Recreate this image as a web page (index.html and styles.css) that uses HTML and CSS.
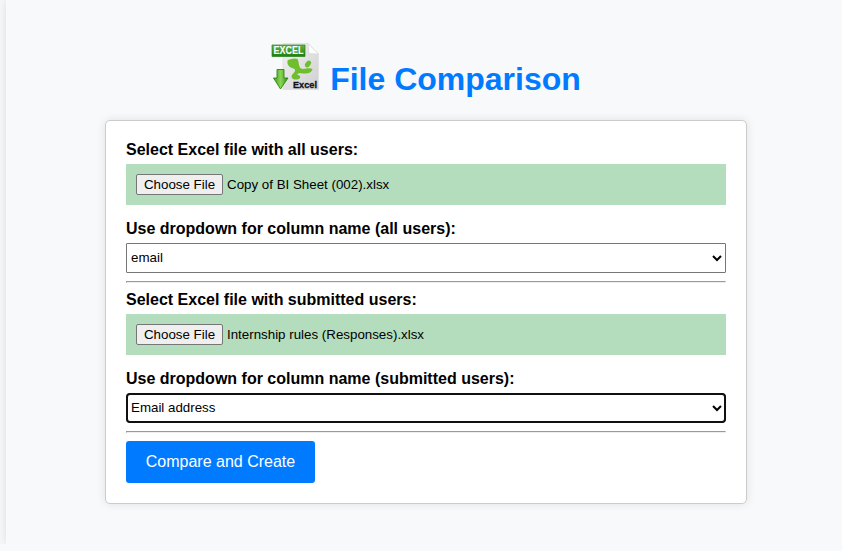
FILE: index.html
```html
<!DOCTYPE html>
<html lang="en">
<head>
<meta charset="utf-8">
<title>File Comparison</title>
<link rel="stylesheet" href="styles.css">
</head>
<body>
<main class="container">
  <header class="heading">
    <svg class="logo" viewBox="0 0 50 50" aria-hidden="true">
      <defs>
        <linearGradient id="paper" x1="0" y1="0" x2="1" y2="1"><stop offset="0" stop-color="#f3f3f4"/><stop offset="1" stop-color="#cfcfd1"/></linearGradient>
        <linearGradient id="banner" x1="0" y1="0" x2="0" y2="1"><stop offset="0" stop-color="#62b843"/><stop offset="1" stop-color="#1f7d12"/></linearGradient>
        <linearGradient id="arrow" x1="0" y1="0" x2="1" y2="0"><stop offset="0" stop-color="#3c9a20"/><stop offset=".5" stop-color="#8bd653"/><stop offset="1" stop-color="#2f8a18"/></linearGradient>
      </defs>
      <path d="M13 2.500h25l10.500 10.500v35.500H13z" fill="url(#paper)" stroke="#dedee0" stroke-width=".7"/>
      <path d="M38 2.500l1 10 9.500.5z" fill="#fff" stroke="#d2d2d4" stroke-width=".6"/>
      <path d="M17.500 19.500C19 18 25 16.500 27.500 18C29 20 28.500 26 31 27.500C34 29 39 26 42.500 28C42 31.500 38 33 33 32.500C30 32 28 32 27 33.500C29 34 31 35 30 37C28 39.500 22 39 21.500 36C21.500 33 24.500 32 25 30C25.500 28 24 27.500 22 27C18.500 26 17 23 17.500 19.500Z" fill="#6fbe2e"/>
      <ellipse cx="38" cy="23" rx="2.500" ry="3.700" transform="rotate(38 38 23)" fill="#6fbe2e"/>
      <path d="M2 4h33v11.500H2z" fill="url(#banner)" stroke="#287f19" stroke-width=".7"/>
      <text class="logo-banner" x="3.500" y="13.300" textLength="30" lengthAdjust="spacingAndGlyphs">EXCEL</text>
      <path d="M7 28.500h7v8.500h4L10.500 48 3.500 37h3.500z" fill="url(#arrow)" stroke="#2d8519" stroke-width=".9" stroke-linejoin="round"/>
      <text class="logo-name" x="23" y="46.500" textLength="24" lengthAdjust="spacingAndGlyphs">Excel</text>
    </svg>
    <h1>File Comparison</h1>
  </header>
  <form class="card">
    <label for="all-file">Select Excel file with all users:</label>
    <div class="file"><button type="button" id="all-file">Choose File</button><span>Copy of BI Sheet (002).xlsx</span></div>
    <label for="all-column">Use dropdown for column name (all users):</label>
    <select id="all-column"><option>email</option></select>
    <hr>
    <label for="submitted-file">Select Excel file with submitted users:</label>
    <div class="file"><button type="button" id="submitted-file">Choose File</button><span>Internship rules (Responses).xlsx</span></div>
    <label for="submitted-column">Use dropdown for column name (submitted users):</label>
    <select id="submitted-column" class="focused"><option>Email address</option></select>
    <hr>
    <button type="button" class="submit">Compare and Create</button>
  </form>
</main>
</body>
</html>
```
FILE: styles.css
```css
* { box-sizing: border-box; }
html { overflow: hidden; }
body {
  margin: 0;
  background: #f8f9fa;
  font-family: "Liberation Sans", Arial, sans-serif;
  color: #000;
}
.container {
  width: 840px;
  height: 544px;
  margin-left: 6px;
  padding-top: 41px;
  background: #f8f9fb;
  box-shadow: 0 0 10px rgba(0, 0, 0, .12);
}
.heading {
  display: flex;
  justify-content: center;
  gap: 10px;
  height: 79px;
  padding-right: 1px;
}
.logo { width: 50px; height: 50px; }
.logo-banner { font-size: 10.5px; font-weight: bold; fill: #fff; }
.logo-name { font-size: 9px; font-weight: bold; fill: #111; stroke: #111; stroke-width: .3px; }
h1 {
  margin: 20px 0 0;
  font-size: 32px;
  line-height: 36px;
  color: #007bff;
}
.card {
  width: 642px;
  margin: 0 auto;
  padding: 20px;
  background: #fff;
  border: 1px solid #ccc;
  border-radius: 5px;
  box-shadow: 0 0 10px rgba(0, 0, 0, .1);
}
label {
  display: block;
  margin-bottom: 5px;
  font-size: 16px;
  line-height: 18px;
  font-weight: bold;
}
.file {
  display: flex;
  align-items: center;
  gap: 4px;
  height: 41px;
  margin-bottom: 15px;
  padding: 0 10px;
  background: #b4ddbd;
  font-size: 13.333px;
}
.file button {
  width: 87px;
  height: 21px;
  padding: 0;
  border: 1px solid #767676;
  border-radius: 2px;
  background: #efefef;
  color: #000;
  font: 13.333px "Liberation Sans", Arial, sans-serif;
}
select {
  display: block;
  width: 100%;
  height: 30px;
  padding: 0 0 1px;
  background: #fff;
  border: 1px solid #767676;
  border-radius: 1px;
  color: #000;
  font: 13.333px "Liberation Sans", Arial, sans-serif;
}
select.focused {
  outline: 2px solid #101010;
  outline-offset: -2px;
  border-radius: 4px;
}
hr {
  height: 2px;
  margin: 8px 0;
  border: 1px solid;
  border-color: #9a9a9a #eee #eee #9a9a9a;
}
.submit {
  display: block;
  width: 189px;
  height: 42px;
  padding: 0;
  border: 0;
  border-radius: 3px;
  background: #007bff;
  color: #fff;
  font: 16px "Liberation Sans", Arial, sans-serif;
}
```
